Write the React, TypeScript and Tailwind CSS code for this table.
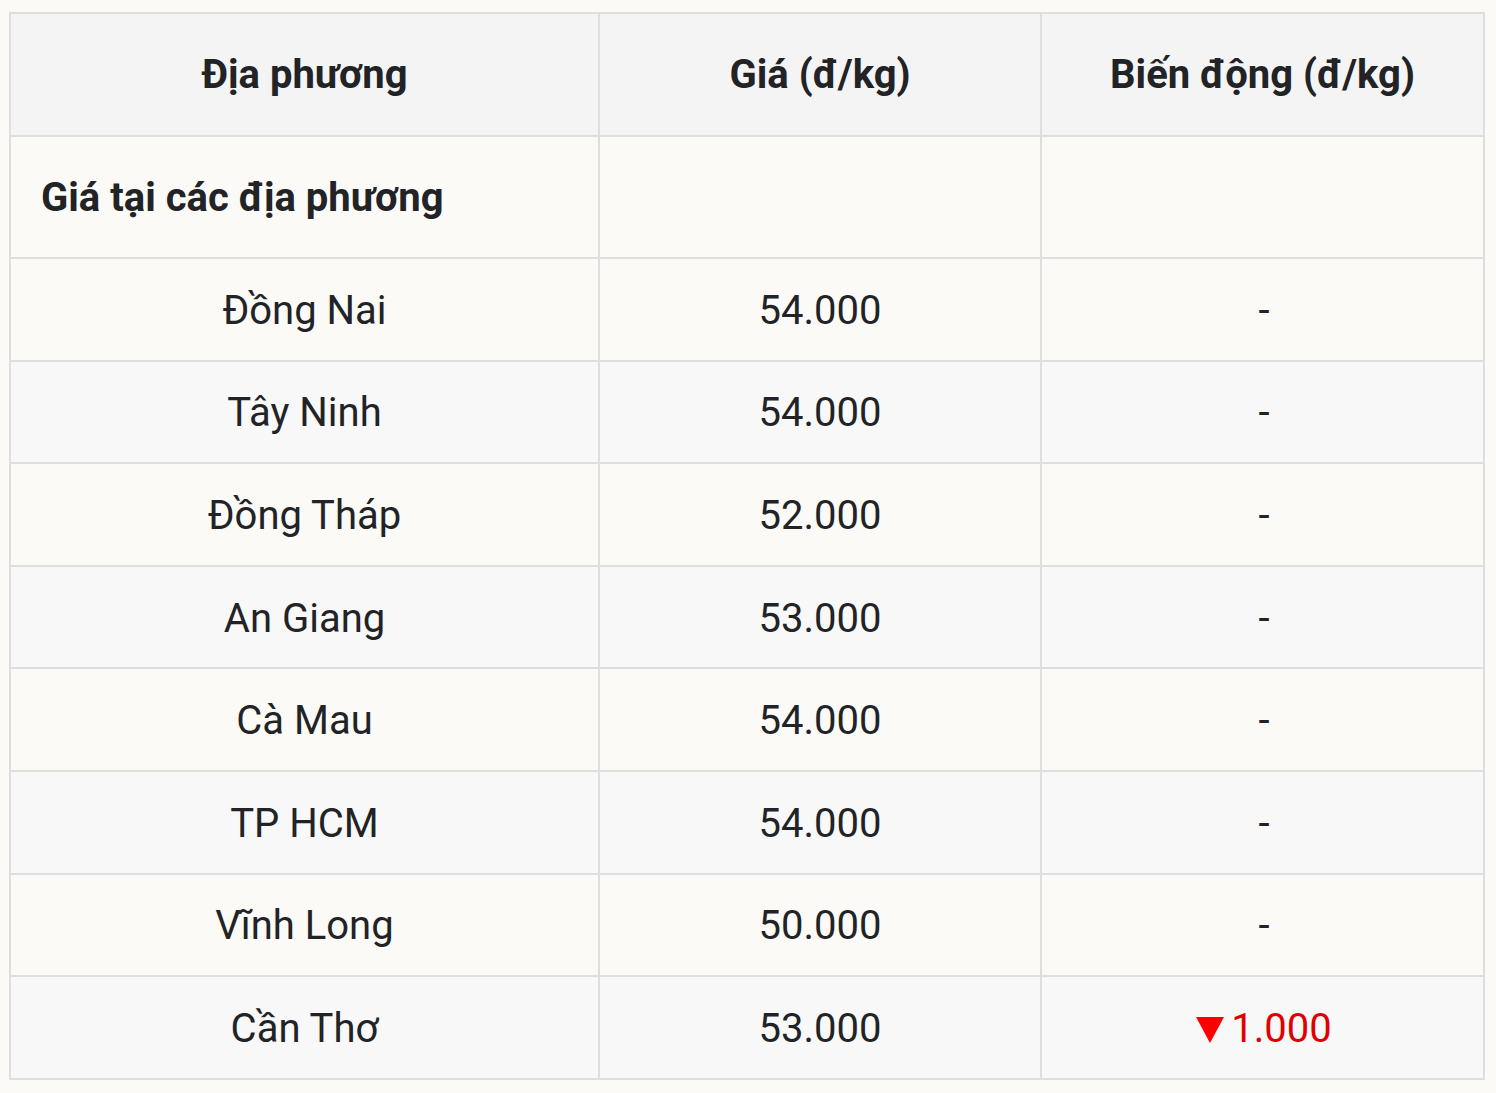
const rows = [
  { name: 'Đồng Nai', price: '54.000', change: null },
  { name: 'Tây Ninh', price: '54.000', change: null },
  { name: 'Đồng Tháp', price: '52.000', change: null },
  { name: 'An Giang', price: '53.000', change: null },
  { name: 'Cà Mau', price: '54.000', change: null },
  { name: 'TP HCM', price: '54.000', change: null },
  { name: 'Vĩnh Long', price: '50.000', change: null },
  { name: 'Cần Thơ', price: '53.000', change: '1.000' },
];

const App = () => {
  return (
    <div
      className="min-h-[1093px] bg-[#fbfaf7] pt-3 pl-[9px] text-[#212326]"
      style={{ fontFamily: 'Roboto, "Liberation Sans", sans-serif' }}
    >
      <table className="w-[1474px] table-fixed border-collapse border-2 border-[#dedede] text-[40px]">
        <colgroup>
          <col className="w-[589px]" />
          <col className="w-[442px]" />
          <col className="w-[443px]" />
        </colgroup>
        <thead>
          {/* Header */}
          <tr className="h-[123px] bg-[#f4f4f4]">
            <th className="border-2 border-[#dedede] text-center font-bold">Địa phương</th>
            <th className="border-2 border-[#dedede] text-center font-bold">Giá (đ/kg)</th>
            <th className="border-2 border-[#dedede] text-center font-bold">Biến động (đ/kg)</th>
          </tr>
        </thead>
        <tbody>
          <tr className="h-[122px] bg-[#fbfaf7]">
            <td className="border-2 border-[#dedede] pl-[30px] pt-[2px] text-left font-bold">Giá tại các địa phương</td>
            <td className="border-2 border-[#dedede]"></td>
            <td className="border-2 border-[#dedede]"></td>
          </tr>
          {rows.map((r, i) => (
            <tr key={r.name} className={`h-[102.6px] ${i % 2 === 0 ? 'bg-[#fbfaf7]' : 'bg-[#f8f8f8]'}`}>
              <td className="border-2 border-[#dedede] pt-[3px] text-center">{r.name}</td>
              <td className="border-2 border-[#dedede] pt-[3px] text-center">{r.price}</td>
              <td className="border-2 border-[#dedede] pt-[3px] pl-[3px] text-center">
                {r.change ? (
                  <span className="inline-flex items-baseline text-[#e00000]">
                    <svg width="28" height="28" viewBox="0 0 28 28" className="mr-[7px] self-center">
                      <polygon points="0,2 28,2 14,28" fill="#ff0000" />
                    </svg>
                    {r.change}
                  </span>
                ) : (
                  '-'
                )}
              </td>
            </tr>
          ))}
        </tbody>
      </table>
    </div>
  );
};

export default App;
